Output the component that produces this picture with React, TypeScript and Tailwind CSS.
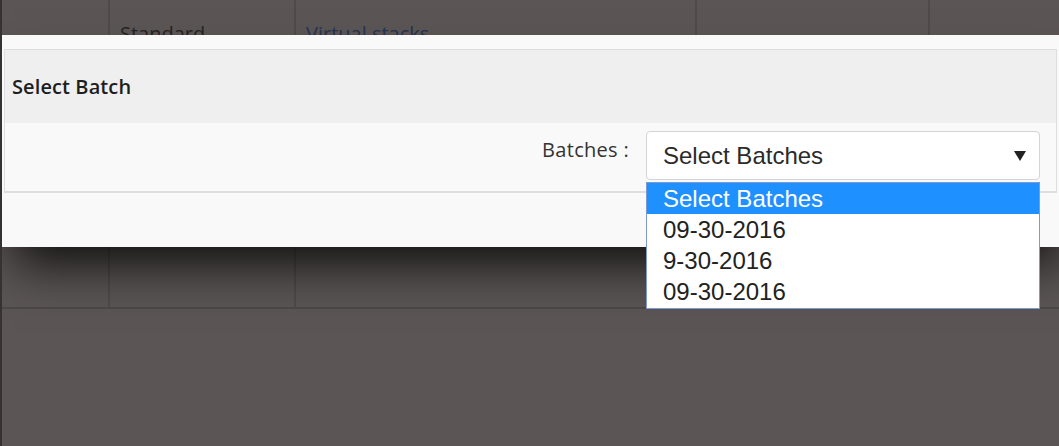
import React from "react";

export default function App() {
  const items = ["Select Batches", "09-30-2016", "9-30-2016", "09-30-2016"];
  return (
    <div className="relative w-[1059px] h-[446px] overflow-hidden bg-[#5b5655] border-l-2 border-[#353232] font-['Open_Sans',sans-serif]">
      {/* background table row */}
      <div className="flex h-[309px] border-b-2 border-[#4c4847]">
        <div className="w-[108px] border-r-2 border-[#4f4b4a]" />
        <div className="w-[186px] border-r-2 border-[#4f4b4a] pl-[10px] pt-[19px] text-[20px] text-[#262324]">
          Standard
        </div>
        <div className="w-[401px] border-r-2 border-[#4f4b4a] pl-[10px] pt-[19px] text-[20px] text-[#27324f]">
          Virtual stacks
        </div>
        <div className="w-[233px] border-r-2 border-[#4f4b4a]" />
        <div className="flex-1" />
      </div>

      {/* modal */}
      <div className="absolute left-0 top-[35px] w-[1070px] h-[212px] bg-[#f9f9f9] pt-[14px] pl-[2px] shadow-[0_30px_46px_-12px_rgba(0,0,0,0.82)]">
        <div className="w-[1053px] border border-b-2 border-[#dedede]">
          <div className="h-[73px] bg-[#efefef] flex items-center pl-[7px] text-[20px] font-semibold text-[#1e1e1e] tracking-[0.1px]">
            Select Batch
          </div>
          <div className="h-[68px] bg-[#f9f9f9] flex justify-end items-start pt-[8px] pr-[16px]">
            <div className="mt-[4px] mr-[17px] text-[20px] tracking-[0.3px] text-[#333]">Batches :</div>
            <div className="relative">
              <div className="w-[394px] h-[49px] bg-white border border-[#d4d4d4] rounded-[4px] flex items-center justify-between pl-[16px] pr-[13px] font-['Liberation_Sans',Arial,sans-serif] text-[24px] text-[#2b2b2b]">
                <span>Select Batches</span>
                <svg width="12" height="10" viewBox="0 0 12 10" className="mt-[1px]">
                  <polygon points="0,0 12,0 6,10" fill="#222" />
                </svg>
              </div>
              <div className="absolute left-0 top-full mt-[2px] w-[394px] h-[127px] bg-white border border-[#7c9ad0] font-['Liberation_Sans',Arial,sans-serif] text-[24px] text-[#222]">
                {items.map((t, i) => (
                  <div
                    key={i}
                    className={
                      i === 0
                        ? "h-[31px] flex items-center pl-[16px] bg-[#1e90ff] text-white"
                        : "h-[31px] flex items-center pl-[16px]"
                    }
                  >
                    {t}
                  </div>
                ))}
              </div>
            </div>
          </div>
        </div>
      </div>
    </div>
  );
}
